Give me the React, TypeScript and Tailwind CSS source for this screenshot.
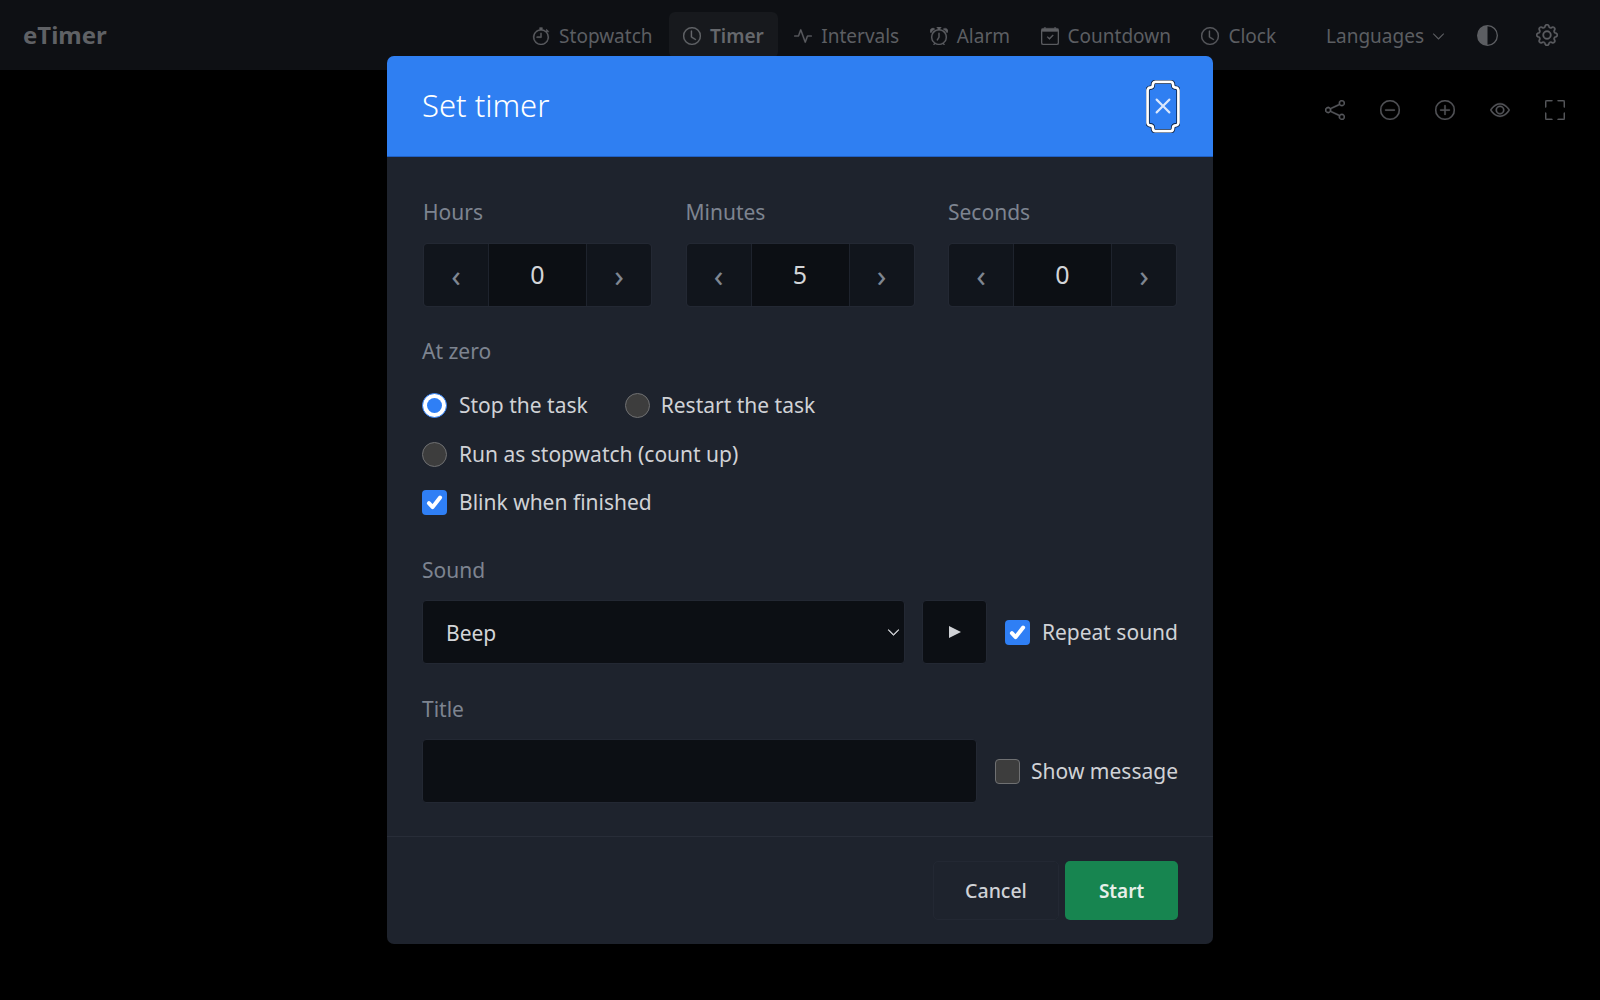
import { BsActivity, BsAlarm, BsCalendarCheck, BsChevronDown, BsCircleHalf, BsClock, BsDashCircle, BsEye, BsFullscreen, BsGear, BsPlusCircle, BsShare, BsStopwatch, BsX } from 'react-icons/bs';

const navItems = [
  { label: 'Stopwatch', Icon: BsStopwatch },
  { label: 'Timer', Icon: BsClock, active: true },
  { label: 'Intervals', Icon: BsActivity },
  { label: 'Alarm', Icon: BsAlarm },
  { label: 'Countdown', Icon: BsCalendarCheck },
  { label: 'Clock', Icon: BsClock },
];

const toolIcons = [BsShare, BsDashCircle, BsPlusCircle, BsEye, BsFullscreen];

function Stepper({ label, value }: { label: string; value: string }) {
  return (
    <div className="w-[229px]">
      <div className="mb-[15px] h-[31px] leading-[31px] text-[#7d8490]">{label}</div>
      <div className="flex h-[64px] gap-px rounded-[4px] border border-[#232833]">
        <button className="w-[64px] rounded-l-[4px] bg-[#11151c] pt-[1px] text-[31px] leading-none text-[#7f8691]">‹</button>
        <div className="flex flex-1 items-center justify-center bg-[#0c0f14] text-[25px] text-[#d3d5d8]">{value}</div>
        <button className="w-[64px] rounded-r-[4px] bg-[#11151c] pt-[1px] text-[31px] leading-none text-[#7f8691]">›</button>
      </div>
    </div>
  );
}

function Radio({ checked }: { checked?: boolean }) {
  if (checked) {
    return (
      <span className="flex size-[25px] shrink-0 items-center justify-center rounded-full border border-[#2f7ff5] bg-white">
        <span className="size-[15px] rounded-full bg-[#2f7ff5]" />
      </span>
    );
  }
  return <span className="block size-[25px] shrink-0 rounded-full border border-[#6f7072] bg-[#3d3d3d]" />;
}

function Check({ checked }: { checked?: boolean }) {
  if (checked) {
    return (
      <span className="flex size-[25px] shrink-0 items-center justify-center rounded-[4px] bg-[#2f7ff5]">
        <svg viewBox="0 0 20 20" className="size-[25px]" fill="none" stroke="#fff" strokeWidth="3.2" strokeLinecap="round" strokeLinejoin="round">
          <path d="M5.5 10.5l3 3.2l6-7.7" />
        </svg>
      </span>
    );
  }
  return <span className="block size-[25px] shrink-0 rounded-[4px] border border-[#6f7072] bg-[#3d3d3d]" />;
}

const ringPath = 'M9 2H25C27 2 27.5 3.5 27.5 5.5C27.5 7.5 29 8 30.5 8C32 8 33 9.5 33 11V44C33 45.5 32 47 30.5 47C29 47 27.5 47.5 27.5 49.5C27.5 51.5 27 53 25 53H9C7 53 6.5 51.5 6.5 49.5C6.5 47.5 5 47 3.5 47C2 47 1 45.5 1 44V11C1 9.5 2 8 3.5 8C5 8 6.5 7.5 6.5 5.5C6.5 3.5 7 2 9 2Z';

export default function App() {
  return (
    <div className="relative h-[1000px] overflow-hidden bg-black font-['Noto_Sans',sans-serif] text-[21px] text-[#d0d2d6]">
      <header className="flex h-[70px] items-center bg-[#0e1014] pl-[23px] pr-[42px] text-[19px] text-[#5c5e62]">
        <span className="text-[24px] font-bold text-[#5f6165]">eTimer</span>
        <nav className="ml-auto flex items-center gap-[2.5px]">
          {navItems.map(({ label, Icon, active }) => (
            <a key={label} className={`flex h-[46px] items-center gap-[9px] rounded-[6px] px-[14px] pt-[2px] ${active ? 'bg-[#17191d] font-semibold text-[#66686c]' : ''}`}>
              <Icon className="size-[18px] stroke-[0.3]" />
              {label}
            </a>
          ))}
        </nav>
        <button className="ml-[36px] flex items-center gap-[8px] pt-[2px]">
          Languages
          <BsChevronDown className="size-[13px] stroke-[0.6]" />
        </button>
        <BsCircleHalf className="ml-[32px] size-[21px]" />
        <BsGear className="ml-[38px] size-[22px] stroke-[0.3]" />
      </header>

      <div className="flex justify-end gap-[35px] pr-[35px] pt-[30px] text-[#55575b]">
        {toolIcons.map((Icon, i) => (
          <Icon key={i} className="size-[20px] stroke-[0.3]" />
        ))}
      </div>

      <div className="absolute left-[387px] top-[56px] w-[826px] overflow-hidden rounded-[7px] bg-[#1e232d]">
        <div className="flex h-[101px] items-center justify-between border-b border-[#2060c4] bg-[#2f7ff2] pl-[35px] pr-[33px]">
          <h2 className="pb-[2px] text-[31px] font-light text-white">Set timer</h2>
          <button className="relative flex h-[53px] w-[34px] items-center justify-center text-[#dbe8fc]">
            <BsX className="size-[36px]" />
            <svg viewBox="0 0 34 55" className="absolute inset-0 h-full w-full" fill="none">
              <path d={ringPath} stroke="#0d2244" strokeWidth="4.5" />
              <path d={ringPath} stroke="#fff" strokeWidth="2.8" />
            </svg>
          </button>
        </div>

        <div className="px-[35px] pt-[40px]">
          <div className="flex justify-between pl-px pr-px">
            <Stepper label="Hours" value="0" />
            <Stepper label="Minutes" value="5" />
            <Stepper label="Seconds" value="0" />
          </div>

          <div className="mt-[29px] h-[31px] leading-[31px] text-[#7d8490]">At zero</div>
          <div className="mt-[22px] flex h-[32px] items-center">
            <Radio checked />
            <span className="ml-[12px] pt-px">Stop the task</span>
            <span className="ml-[37px]"><Radio /></span>
            <span className="ml-[11px] pt-px">Restart the task</span>
          </div>
          <div className="mt-[17px] flex h-[32px] items-center gap-[12px]">
            <Radio />
            <span className="pt-px">Run as stopwatch (count up)</span>
          </div>
          <div className="mt-[16px] flex h-[32px] items-center gap-[12px]">
            <Check checked />
            <span className="pt-px">Blink when finished</span>
          </div>

          <div className="mt-[37px] h-[31px] leading-[31px] text-[#7d8490]">Sound</div>
          <div className="mt-[14px] flex items-center">
            <div className="relative w-[483px]">
              <select className="h-[64px] w-full appearance-none rounded-[4px] border border-[#232833] bg-[#0c0f14] pl-[23px] pt-[3px] text-[#d3d5d8]">
                <option>Beep</option>
              </select>
              <BsChevronDown className="absolute right-[5px] top-[26px] size-[13px] stroke-1 text-[#c4c6ca]" />
            </div>
            <button className="ml-[17px] flex h-[64px] w-[65px] items-center justify-center rounded-[4px] border border-[#232833] bg-[#0c0f14]">
              <span className="border-y-[6.5px] border-l-[12px] border-y-transparent border-l-[#d0d2d6]" />
            </button>
            <span className="ml-auto flex items-center gap-[12px]">
              <Check checked />
              <span className="pt-px">Repeat sound</span>
            </span>
          </div>

          <div className="mt-[30px] h-[31px] leading-[31px] text-[#7d8490]">Title</div>
          <div className="mt-[14px] flex items-center">
            <input className="h-[64px] w-[555px] rounded-[4px] border border-[#232833] bg-[#0c0f14]" />
            <span className="ml-auto flex items-center gap-[11px]">
              <Check />
              <span className="pt-px">Show message</span>
            </span>
          </div>
        </div>

        <div className="mt-[33px] flex h-[108px] items-start justify-end gap-[6px] border-t border-[#282d38] pl-[36px] pr-[35px] pt-[24px]">
          <button className="h-[59px] w-[126px] rounded-[5px] border border-[#232833] text-[19.5px] font-medium">Cancel</button>
          <button className="h-[59px] w-[113px] rounded-[5px] bg-[#178550] pt-px text-[19px] font-semibold text-[#e8efe9]">Start</button>
        </div>
      </div>
    </div>
  );
}
